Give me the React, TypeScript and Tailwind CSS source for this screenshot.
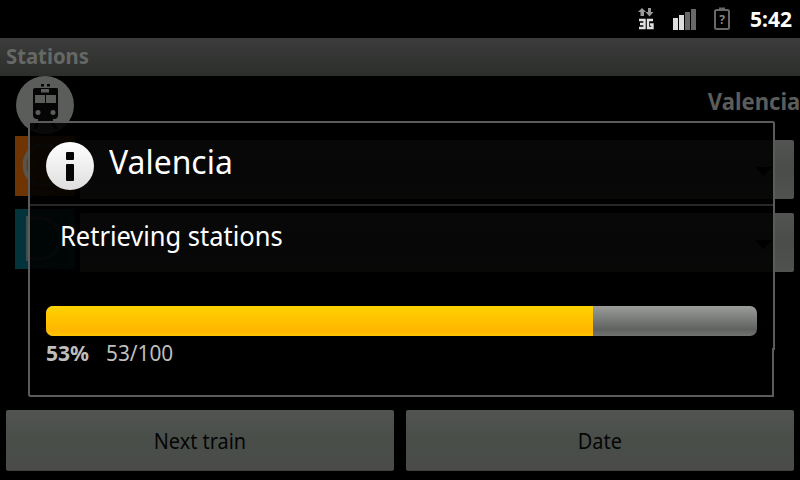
import React from 'react';

function StatusBar() {
  return (
    <header className="flex h-[38px] items-center bg-black pl-[636px] text-white">
      <svg width="20" height="26" viewBox="0 0 20 26" className="shrink-0">
        <path d="M6 2L10 6H8V10H4.500V6H2z" fill="#999" />
        <path d="M12 2H15V6H17.500L13.500 10.500L9.500 6H12z" fill="#999" />
        <path d="M3 14H8.500V22H3M4 18H8.500M17 14H12V22H16.500V18.500H14" fill="none" stroke="#e0e0e0" strokeWidth="2.400" />
      </svg>
      <svg width="24" height="26" viewBox="0 0 24 26" className="ml-[16px] shrink-0">
        <rect x="1" y="12" width="5" height="12" fill="#ddd" />
        <rect x="7" y="9" width="5" height="15" fill="#ddd" />
        <rect x="13" y="6" width="5" height="18" fill="#686868" />
        <rect x="19" y="3" width="5" height="21" fill="#686868" />
      </svg>
      <svg width="18" height="26" viewBox="0 0 18 26" className="ml-[17px] shrink-0">
        <rect x="2" y="4" width="14" height="19" rx="1.500" fill="none" stroke="#686868" strokeWidth="2" />
        <path d="M6 1.500h6v3H6z" fill="#686868" />
        <text x="9" y="18" textAnchor="middle" fontSize="12" fontWeight="700" fill="#858585" fontFamily="Noto Sans, sans-serif">?</text>
      </svg>
      <span className="ml-[19px] text-[21px] font-bold leading-[38px]">5:42</span>
    </header>
  );
}

function TrainBadge() {
  return (
    <svg width="58" height="60" viewBox="0 0 58 60" className="ml-4">
      <circle cx="29" cy="29" r="29" fill="#5b5d5b" />
      <g fill="#050505">
        <path d="M25 8h3v2.500h-3zM31 8h3v2.500h-3zM19 12h22q1 0 1 2v25q0 3-3 4H20q-3-1-3-4V14q0-2 2-2z" />
        <path d="M22 43h15v2H22zM20 46h4l-4 7h-3zM34 46h4l4 7h-3z" />
      </g>
      <g fill="#5b5d5b">
        <path d="M25 13h8v3.500h-8zM19 19h10v8H19zM30 19h10v8H30z" />
        <circle cx="22" cy="36.500" r="2.500" />
        <circle cx="37" cy="36.500" r="2.500" />
      </g>
    </svg>
  );
}

function Spinner() {
  return (
    <div className="flex h-[59px] w-[714px] items-center justify-end rounded-[2px] bg-linear-to-b from-[#525452] via-[#494c49] to-[#50524f] pt-[4px] pr-[22px]">
      <svg width="17" height="9" viewBox="0 0 17 9"><path d="M0 0h17L8.500 9z" fill="#000" /></svg>
    </div>
  );
}

function SelectRows() {
  return (
    <div className="flex flex-col">
      <div className="flex h-[73px] gap-[5px] pl-[15px]">
        <svg width="60" height="60" viewBox="0 0 60 60">
          <rect width="60" height="60" fill="#6e3503" />
          <path d="M43 16a19 20 0 1 0 0 26" fill="none" stroke="#59544a" strokeWidth="4" />
          <text x="29" y="58" textAnchor="middle" fontSize="7" fill="#5b5d5b" fontFamily="Noto Sans, sans-serif">origen</text>
        </svg>
        <div className="pt-1"><Spinner /></div>
      </div>
      <div className="flex h-[73px] gap-[5px] pl-[15px]">
        <svg width="60" height="60" viewBox="0 0 60 60">
          <rect width="60" height="60" fill="#04343b" />
          <path d="M13 9v41h10c30 0 30-41 0-41z" fill="none" stroke="#3f4f4f" strokeWidth="4" />
          <text x="29" y="58" textAnchor="middle" fontSize="7" fill="#5b5d5b" fontFamily="Noto Sans, sans-serif">destino</text>
        </svg>
        <div className="pt-1"><Spinner /></div>
      </div>
    </div>
  );
}

function ActionButton({ children }: { children: React.ReactNode }) {
  return (
    <button className="flex h-[61px] flex-1 items-center justify-center rounded-[2px] border-b border-[#40423f] bg-linear-to-b from-[#525452] via-[#494e49] to-[#4a4b49] pt-[3px] text-[21.500px] text-[#050505]">
      <span className="scale-x-[0.925]">{children}</span>
    </button>
  );
}

function ProgressDialog() {
  return (
    <section className="absolute top-[121px] left-[28px] h-[276px] w-[747px] text-white">
      <svg width="747" height="276" className="absolute inset-0">
        <path d="M2 1H745L746 2V228H745V275H2L1 274V2z" fill="#000" fillOpacity="0.9" stroke="#5b5b5b" strokeWidth="2" />
      </svg>
      <div className="relative flex h-full flex-col px-[2px] pt-[2px]">
        <div className="flex h-[83px] items-center border-b-2 border-[#272727] pl-4">
          <svg width="48" height="48" viewBox="0 0 48 48" className="mt-[5px]">
            <defs>
              <linearGradient id="info" x2="0" y2="1"><stop stopColor="#fff" /><stop offset="1" stopColor="#dedede" /></linearGradient>
            </defs>
            <circle cx="24" cy="24" r="24" fill="url(#info)" />
            <rect x="20" y="10" width="8" height="8" rx="1" fill="#050505" />
            <rect x="20" y="22" width="8" height="17" rx="1" fill="#050505" />
          </svg>
          <h2 className="mb-[3px] ml-[15px] origin-left scale-x-[0.967] text-[33px] leading-[40px]">Valencia</h2>
        </div>
        <p className="mt-[10px] ml-[30px] origin-left scale-x-[0.943] self-start text-[27px] leading-[40px]">Retrieving stations</p>
        <div className="mt-[50px] ml-4 flex h-[30px] w-[711px] overflow-hidden rounded-[7px] bg-linear-to-b from-[#9b9d9b] via-[#5f635f] via-78% to-[#717371]">
          <div className="w-[547px] bg-linear-to-b from-[#ffd300] via-[#ffb600] via-80% to-[#ffc600]" />
        </div>
        <div className="ml-4 flex gap-[17px] pt-[2px] text-[21px] leading-[30px] text-[#bebebe]">
          <span className="origin-left font-bold">53%</span>
          <span className="origin-left scale-x-[0.99]">53/100</span>
        </div>
      </div>
    </section>
  );
}

export default function App() {
  return (
    <main className="relative flex h-[480px] w-[800px] flex-col overflow-hidden bg-black font-['Noto_Sans',sans-serif]">
      <StatusBar />
      <div className="flex h-[38px] items-center bg-linear-to-b from-[#3b3c3b] to-[#2c2e2c] pl-[6px] text-[21px] font-bold text-[#656865]">
        <h1 className="origin-left scale-x-[0.965]">Stations</h1>
      </div>
      <div className="flex h-[60px] items-start justify-between">
        <TrainBadge />
        <span className="mt-[9px] origin-right scale-x-[0.96] text-[23px] font-bold leading-[32px] text-[#5b5d5b]">Valencia</span>
      </div>
      <SelectRows />
      <footer className="mt-auto flex gap-3 px-[6px] pb-[9px]">
        <ActionButton>Next train</ActionButton>
        <ActionButton>Date</ActionButton>
      </footer>
      <ProgressDialog />
    </main>
  );
}
